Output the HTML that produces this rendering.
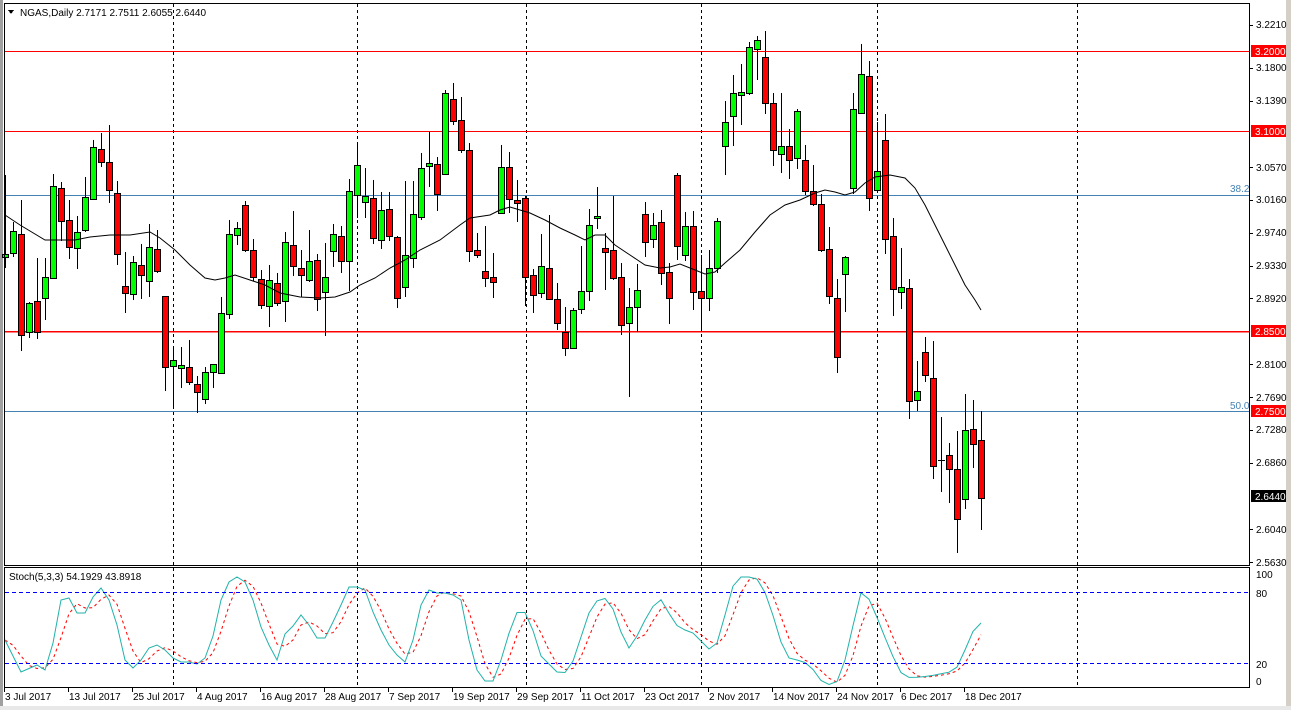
<!DOCTYPE html>
<html><head><meta charset="utf-8">
<style>
html,body{margin:0;padding:0;background:#fff;}
body{width:1291px;height:710px;overflow:hidden;position:relative;font-family:"Liberation Sans","DejaVu Sans",sans-serif;}
svg{position:absolute;left:0;top:0;}
text{font-family:"Liberation Sans","DejaVu Sans",sans-serif;font-size:10px;fill:#000;}
</style></head><body>
<svg id="s" width="1291" height="710" xmlns="http://www.w3.org/2000/svg" shape-rendering="crispEdges">
<rect x="0" y="0" width="1291" height="710" fill="#fff"/>
<rect x="0" y="0" width="3" height="710" fill="#a0a0a0"/>
<rect x="1286" y="0" width="5" height="710" fill="#d4d0c8"/>
<rect x="0" y="706" width="1291" height="4" fill="#e8e8e8"/>
<g id="grid"></g>
<rect x="5" y="51" width="1244" height="1" fill="#ff0000"/>
<rect x="5" y="131" width="1244" height="1" fill="#ff0000"/>
<rect x="5" y="331" width="1244" height="1.5" fill="#ff0000"/>
<rect x="5" y="195" width="1244" height="1" fill="#4682b4"/>
<rect x="5" y="411" width="1244" height="1" fill="#4682b4"/>
<text x="1230" y="192" style="fill:#4682b4">38.2</text>
<text x="1230" y="409" style="fill:#4682b4">50.0</text>
<g id="candles"></g>
<polyline id="ma" fill="none" stroke="#000" stroke-width="1" shape-rendering="auto"/>
<polyline id="sig" fill="none" stroke="#ff0000" stroke-width="1" stroke-dasharray="3,3" shape-rendering="auto"/>
<polyline id="stm" fill="none" stroke="#20b2aa" stroke-width="1" shape-rendering="auto"/>
<line x1="5" y1="592.5" x2="1249" y2="592.5" stroke="#0000ff" stroke-dasharray="4,3"/>
<line x1="5" y1="663.5" x2="1249" y2="663.5" stroke="#0000ff" stroke-dasharray="4,3"/>
<rect x="4.5" y="3.5" width="1245" height="562" fill="none" stroke="#000"/>
<rect x="4.5" y="567.5" width="1245" height="120" fill="none" stroke="#000"/>
<polygon points="8,10 14,10 11,14" fill="#000"/>
<text x="20" y="16">NGAS,Daily  2.7171 2.7511 2.6055 2.6440</text>
<text x="9" y="580">Stoch(5,3,3) 54.1929 43.8918</text>
<g id="axis"></g>
<text x="1256" y="28">3.2210</text>
<text x="1256" y="71">3.1800</text>
<text x="1256" y="104">3.1390</text>
<text x="1256" y="171">3.0570</text>
<text x="1256" y="203">3.0160</text>
<text x="1256" y="236">2.9740</text>
<text x="1256" y="269">2.9330</text>
<text x="1256" y="302">2.8920</text>
<text x="1256" y="368">2.8100</text>
<text x="1256" y="401">2.7690</text>
<text x="1256" y="433">2.7280</text>
<text x="1256" y="466">2.6860</text>
<text x="1256" y="533">2.6040</text>
<text x="1256" y="566">2.5630</text>
<rect x="1251" y="45" width="35" height="12" fill="#ff0000"/><text x="1255" y="55" style="fill:#fff">3.2000</text>
<rect x="1251" y="125" width="35" height="12" fill="#ff0000"/><text x="1255" y="135" style="fill:#fff">3.1000</text>
<rect x="1251" y="325" width="35" height="12" fill="#ff0000"/><text x="1255" y="335" style="fill:#fff">2.8500</text>
<rect x="1251" y="405" width="35" height="12" fill="#ff0000"/><text x="1255" y="415" style="fill:#fff">2.7500</text>
<rect x="1251" y="490" width="35" height="12" fill="#000"/><text x="1255" y="500" style="fill:#fff">2.6440</text>
<text x="1256" y="578">100</text>
<text x="1256" y="597">80</text>
<text x="1256" y="668">20</text>
<text x="1256" y="685">0</text>
<text x="5" y="700">3 Jul 2017</text>
<text x="69" y="700">13 Jul 2017</text>
<text x="133" y="700">25 Jul 2017</text>
<text x="197" y="700">4 Aug 2017</text>
<text x="261" y="700">16 Aug 2017</text>
<text x="325" y="700">28 Aug 2017</text>
<text x="389" y="700">7 Sep 2017</text>
<text x="453" y="700">19 Sep 2017</text>
<text x="517" y="700">29 Sep 2017</text>
<text x="581" y="700">11 Oct 2017</text>
<text x="645" y="700">23 Oct 2017</text>
<text x="709" y="700">2 Nov 2017</text>
<text x="773" y="700">14 Nov 2017</text>
<text x="837" y="700">24 Nov 2017</text>
<text x="901" y="700">6 Dec 2017</text>
<text x="965" y="700">18 Dec 2017</text>
</svg>
<script>
var NS="http://www.w3.org/2000/svg";
function el(p,t,a){var e=document.createElementNS(NS,t);for(var k in a)e.setAttribute(k,a[k]);p.appendChild(e);return e;}
var grid=document.getElementById('grid');
[173,357,526,701,877,1077].forEach(function(x){el(grid,'line',{x1:x+.5,y1:4,x2:x+.5,y2:687,stroke:'#000','stroke-dasharray':'3,3'});});
var ax=document.getElementById('axis');
for(var i=0;i<16;i++){var x=4+64*i;el(ax,'line',{x1:x+.5,y1:688,x2:x+.5,y2:692,stroke:'#000'});}
[25,68,101,167,200,233,266,298,364,397,430,463,529,562].forEach(function(y){el(ax,'line',{x1:1249,y1:y+.5,x2:1253,y2:y+.5,stroke:'#000'});});
var C=[
[5,175,268,254,257,1],
[13,222,257,231,253,1],[21,200,351,234,335,0],[29,302,338,303,332,1],[37,258,339,301,332,0],[45,258,320,277,298,1],
[53,174,279,186,278,1],[61,182,241,188,221,0],[69,200,259,220,247,0],[77,216,269,232,248,1],[85,177,232,197,230,1],
[93,140,200,147,199,1],[101,133,167,149,162,0],[109,125,203,162,190,0],[117,181,265,193,254,0],[125,252,313,286,293,0],
[133,256,300,262,294,1],[141,244,299,265,275,0],[149,224,297,247,281,1],[157,230,273,249,271,0],[165,296,391,296,367,0],
[173,346,408,360,366,1],[181,347,388,365,368,1],[189,340,385,367,382,0],[197,376,413,384,392,0],[205,367,404,372,399,1],
[213,364,388,364,372,1],[221,297,374,313,373,1],[229,220,319,234,314,1],[237,222,245,228,235,1],[245,201,252,205,250,0],
[253,239,281,250,277,0],[261,270,309,279,305,0],[269,265,327,280,306,1],[277,273,306,283,303,0],[285,232,322,242,301,1],
[293,211,276,245,266,0],[301,250,297,268,275,0],[309,230,282,261,280,1],[317,254,311,260,299,0],[325,243,336,277,292,1],
[333,224,267,234,251,1],[341,226,273,236,261,0],[349,179,291,191,261,1],[357,142,218,165,195,1],[365,168,218,196,202,1],
[373,180,244,198,238,0],[381,192,249,210,240,1],[389,192,241,209,236,0],[397,236,308,237,298,0],[405,181,297,255,287,1],
[413,181,268,214,258,1],[421,153,220,168,217,1],[429,132,187,163,166,1],[437,157,211,164,194,0],[445,90,174,93,174,1],
[453,83,125,99,121,0],[461,97,153,120,150,0],[469,143,262,150,251,0],[477,233,258,250,255,0],[485,226,287,271,278,0],
[493,253,298,277,282,0],[501,145,214,167,213,1],[509,152,213,167,199,0],[517,180,222,200,203,0],[525,196,306,198,277,0],
[533,269,313,275,295,0],[541,234,298,266,293,1],[549,215,300,268,299,0],[557,283,330,299,323,0],[565,307,356,332,348,0],
[573,308,348,310,348,1],[581,246,314,291,309,1],[589,209,301,225,291,1],[597,187,229,216,218,1],[605,233,290,248,252,0],
[613,196,280,250,278,0],[621,263,335,277,325,0],[629,288,397,307,323,1],[637,264,332,290,307,1],[645,202,257,214,242,0],
[653,213,248,225,239,1],[661,210,285,222,273,0],[669,263,324,272,298,0],[677,173,260,175,246,0],[685,212,261,226,255,1],
[693,211,310,226,292,0],[701,255,330,291,298,0],[709,250,311,268,298,1],[717,218,273,221,268,1],[725,101,175,122,146,1],
[733,75,146,93,116,1],[741,64,125,92,95,1],[749,42,95,47,93,1],[757,36,80,40,49,1],[765,31,114,57,103,0],
[773,93,166,103,150,0],[781,93,173,146,154,1],[789,129,179,146,160,0],[797,109,169,111,158,1],[805,145,195,160,191,0],
[813,165,206,191,204,0],[821,194,252,204,250,0],[829,227,304,249,296,0],[837,279,373,298,357,0],[845,256,312,257,274,1],
[853,93,194,109,188,1],[861,44,114,74,113,1],[869,61,211,76,198,0],[877,122,192,171,190,1],[885,114,254,140,239,0],
[893,218,316,236,289,0],[901,248,309,287,292,1],[909,279,419,288,401,0],[917,361,411,391,400,1],[925,337,382,352,375,0],
[933,341,479,378,466,0],[941,417,492,460,460,0],[949,443,503,455,469,0],[957,431,553,469,519,0],[965,394,509,430,499,1],
[973,400,468,429,444,0],[981,411,530,440,498,0]];
var g=document.getElementById('candles');
C.forEach(function(c){var x=c[0];
el(g,'line',{x1:x+.5,y1:c[1],x2:x+.5,y2:c[2],stroke:'#000'});
var h=Math.max(c[4]-c[3],1);
if(c[4]==c[3]){el(g,'line',{x1:x-3,y1:c[3]+.5,x2:x+4,y2:c[3]+.5,stroke:'#000'});}
else el(g,'rect',{x:x-2.5,y:c[3]+.5,width:6,height:h,fill:c[5]?'#00ff00':'#ff0000',stroke:'#000'});
});
var MA=[[5,215],[20,225],[45,240],[60,240],[75,240],[90,237],[110,235],[130,235],[150,232],[160,238],[175,250],[190,265],[205,278],[215,280],[225,278],[235,275],[250,280],[265,285],[280,293],[300,297],[320,298],[335,297],[350,292],[360,285],[375,278],[390,268],[405,260],[420,250],[440,240],[460,225],[470,218],[490,215],[500,210],[510,207],[520,210],[530,213],[545,220],[560,228],[575,235],[585,240],[595,235],[605,235],[615,245],[630,255],[645,265],[660,268],[670,267],[680,264],[695,270],[705,274],[715,272],[725,263],[740,250],[755,232],[770,215],[785,205],[800,200],[815,193],[825,190],[835,192],[845,195],[855,192],[865,183],[875,177],[890,175],[905,178],[915,188],[925,205],[935,225],[945,245],[955,265],[965,285],[975,300],[981,310]];
document.getElementById('ma').setAttribute('points',MA.map(function(p){return p.join(',')}).join(' '));
var ST=[[5,640],[21,672],[37,665],[45,670],[53,643],[61,600],[69,598],[77,613],[85,613],[93,597],[101,588],[109,600],[117,625],[125,660],[133,668],[141,660],[149,648],[157,645],[165,650],[173,658],[181,662],[189,662],[197,664],[205,658],[213,636],[221,600],[229,582],[237,577],[245,582],[253,600],[261,627],[269,645],[277,660],[285,634],[293,626],[301,615],[309,625],[317,638],[325,638],[333,622],[341,605],[349,587],[357,587],[365,590],[373,612],[381,630],[389,645],[397,655],[405,662],[413,640],[421,605],[429,590],[437,593],[445,593],[453,595],[461,600],[469,640],[477,670],[485,681],[493,681],[501,660],[510,630],[520,605],[530,620],[540,655],[550,665],[560,675],[570,670],[580,640],[590,610],[600,597],[610,600],[620,630],[630,650],[640,630],[650,610],[660,598],[670,615],[680,630],[690,630],[700,640],[710,650],[720,640],[730,590],[740,577],[750,577],[760,580],[770,605],[780,640],[790,660],[800,660],[810,665],[820,680],[830,685],[840,680],[850,640],[860,592],[870,600],[880,625],[890,650],[900,672],[910,678],[920,677],[930,676],[940,674],[950,672],[960,665],[970,635],[980,623]];
function interp(x){for(var i=1;i<ST.length;i++){if(ST[i][0]>=x){var a=ST[i-1],b=ST[i];return a[1]+(b[1]-a[1])*(x-a[0])/(b[0]-a[0]);}}return ST[ST.length-1][1];}
var mp=[],sp=[],vals=[];
for(var x=5;x<=981;x+=8){var v=interp(x);vals.push(v);mp.push(x+','+v.toFixed(1));}
for(var i=0;i<vals.length;i++){var a=vals[Math.max(0,i-2)],b=vals[Math.max(0,i-1)],c=vals[i];sp.push((5+8*i)+','+((a+b+c)/3).toFixed(1));}
document.getElementById('stm').setAttribute('points',mp.join(' '));
document.getElementById('sig').setAttribute('points',sp.join(' '));
</script>
</body></html>
